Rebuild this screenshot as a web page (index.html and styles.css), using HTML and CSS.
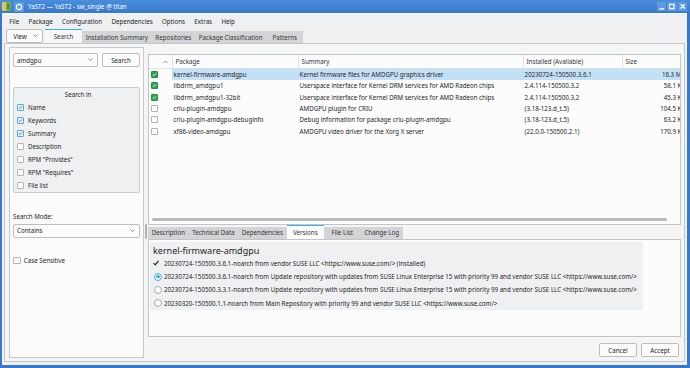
FILE: index.html
```html
<!DOCTYPE html>
<html>
<head>
<meta charset="utf-8">
<title>YaST2</title>
<link rel="stylesheet" href="styles.css">
</head>
<body>
<div class="window">
  <div class="titlebar">
    <svg class="appicon" viewBox="0 0 9 9"><rect x="0" y="0" width="9" height="9" rx="1" fill="#7fb24a"/><rect x="0" y="0" width="4" height="9" rx="1" fill="#e2c45a"/><rect x="5" y="1.5" width="3" height="6" fill="#5c8f33"/></svg>
    <svg class="pinicon" viewBox="0 0 10 10"><rect x="0" y="0" width="10" height="10" rx="1" fill="#5e9de3"/><circle cx="5" cy="5" r="2.6" fill="none" stroke="#fff" stroke-width="1.2"/></svg>
    <span class="title">YaST2 — YaST2 - sw_single @ titan</span>
    <div class="wbtns">
      <span class="wbtn"><svg viewBox="0 0 10 9"><line x1="2.5" y1="7" x2="7.5" y2="7" stroke="#fff" stroke-width="1.4"/></svg></span>
      <span class="wbtn"><svg viewBox="0 0 10 9"><rect x="2.7" y="2.2" width="4.6" height="4.6" fill="none" stroke="#fff" stroke-width="1.2"/></svg></span>
      <span class="wbtn"><svg viewBox="0 0 10 9"><path d="M2.8 2 L7.2 6.6 M7.2 2 L2.8 6.6" stroke="#fff" stroke-width="1.4"/></svg></span>
    </div>
  </div>
  <div class="client">
    <div class="menubar">
      <span class="mi">File</span><span class="mi">Package</span><span class="mi">Configuration</span><span class="mi">Dependencies</span><span class="mi">Options</span><span class="mi">Extras</span><span class="mi">Help</span>
    </div>
    <div class="tabrow">
      <div class="combo view"><span>View</span><svg class="chev" viewBox="0 0 6 4"><polyline points="0.5,0.5 3,3 5.5,0.5" fill="none" stroke="#555" stroke-width="0.8"/></svg></div>
      <div class="tabs">
        <div class="tab active">Search</div>
        <div class="tab">Installation Summary</div>
        <div class="tab">Repositories</div>
        <div class="tab">Package Classification</div>
        <div class="tab">Patterns</div>
      </div>
    </div>
    <div class="page">
      <div class="leftpane">
        <div class="searchrow">
          <div class="combo query"><span>amdgpu</span><svg class="chev" viewBox="0 0 6 4"><polyline points="0.5,0.5 3,3 5.5,0.5" fill="none" stroke="#555" stroke-width="0.8"/></svg></div>
          <button class="btn searchbtn">Search</button>
        </div>
        <div class="group">
          <div class="gtitle">Search in</div>
          <div class="cbrow"><span class="cb on"><svg viewBox="0 0 7 7"><path d="M1.4 3.6 L2.9 5 L5.6 1.9" fill="none" stroke="#1f5f99" stroke-width="1"/></svg></span>Name</div>
          <div class="cbrow"><span class="cb on"><svg viewBox="0 0 7 7"><path d="M1.4 3.6 L2.9 5 L5.6 1.9" fill="none" stroke="#1f5f99" stroke-width="1"/></svg></span>Keywords</div>
          <div class="cbrow"><span class="cb on"><svg viewBox="0 0 7 7"><path d="M1.4 3.6 L2.9 5 L5.6 1.9" fill="none" stroke="#1f5f99" stroke-width="1"/></svg></span>Summary</div>
          <div class="cbrow"><span class="cb"></span>Description</div>
          <div class="cbrow"><span class="cb"></span>RPM "Provides"</div>
          <div class="cbrow"><span class="cb"></span>RPM "Requires"</div>
          <div class="cbrow"><span class="cb"></span>File list</div>
        </div>
        <div class="modelabel">Search Mode:</div>
        <div class="combo mode"><span>Contains</span><svg class="chev" viewBox="0 0 6 4"><polyline points="0.5,0.5 3,3 5.5,0.5" fill="none" stroke="#555" stroke-width="0.8"/></svg></div>
        <div class="caserow"><span class="cb"></span>Case Sensitive</div>
      </div>
      <div class="splitter"></div>
      <div class="rightcol">
        <div class="pkgtable">
          <div class="trow thead">
            <div class="c c0"><svg class="sort" viewBox="0 0 6 4"><polyline points="0.5,3.5 3,1 5.5,3.5" fill="none" stroke="#666" stroke-width="0.8"/></svg></div>
            <div class="c">Package</div>
            <div class="c">Summary</div>
            <div class="c">Installed (Available)</div>
            <div class="c">Size</div>
          </div>
          <div class="trow sel">
            <div class="c c0"><span class="gcb on"><svg viewBox="0 0 7 7"><path d="M1.4 3.6 L2.9 5 L5.6 1.9" fill="none" stroke="#fff" stroke-width="1.1"/></svg></span></div>
            <div class="c">kernel-firmware-amdgpu</div>
            <div class="c">Kernel firmware files for AMDGPU graphics driver</div>
            <div class="c">20230724-150500.3.6.1</div>
            <div class="c size">16.3 MiB</div>
          </div>
          <div class="trow">
            <div class="c c0"><span class="gcb on"><svg viewBox="0 0 7 7"><path d="M1.4 3.6 L2.9 5 L5.6 1.9" fill="none" stroke="#fff" stroke-width="1.1"/></svg></span></div>
            <div class="c">libdrm_amdgpu1</div>
            <div class="c">Userspace interface for Kernel DRM services for AMD Radeon chips</div>
            <div class="c">2.4.114-150500.3.2</div>
            <div class="c size">58.1 KiB</div>
          </div>
          <div class="trow">
            <div class="c c0"><span class="gcb on"><svg viewBox="0 0 7 7"><path d="M1.4 3.6 L2.9 5 L5.6 1.9" fill="none" stroke="#fff" stroke-width="1.1"/></svg></span></div>
            <div class="c">libdrm_amdgpu1-32bit</div>
            <div class="c">Userspace interface for Kernel DRM services for AMD Radeon chips</div>
            <div class="c">2.4.114-150500.3.2</div>
            <div class="c size">45.3 KiB</div>
          </div>
          <div class="trow">
            <div class="c c0"><span class="gcb"></span></div>
            <div class="c">criu-plugin-amdgpu</div>
            <div class="c">AMDGPU plugin for CRIU</div>
            <div class="c">(3.18-123.d_t.5)</div>
            <div class="c size">104.5 KiB</div>
          </div>
          <div class="trow">
            <div class="c c0"><span class="gcb"></span></div>
            <div class="c">criu-plugin-amdgpu-debuginfo</div>
            <div class="c">Debug information for package criu-plugin-amdgpu</div>
            <div class="c">(3.18-123.d_t.5)</div>
            <div class="c size">63.2 KiB</div>
          </div>
          <div class="trow">
            <div class="c c0"><span class="gcb"></span></div>
            <div class="c">xf86-video-amdgpu</div>
            <div class="c">AMDGPU video driver for the Xorg X server</div>
            <div class="c">(22.0.0-150500.2.1)</div>
            <div class="c size">170.9 KiB</div>
          </div>
          <div class="hscroll"></div>
        </div>
        <div class="dtabs">
          <div class="tab">Description</div>
          <div class="tab">Technical Data</div>
          <div class="tab">Dependencies</div>
          <div class="tab active">Versions</div>
          <div class="tab">File List</div>
          <div class="tab">Change Log</div>
        </div>
        <div class="dpane">
          <div class="versions">
            <div class="vhead">kernel-firmware-amdgpu</div>
            <div class="vline"><span class="mark"><svg class="tick" viewBox="0 0 6 6"><path d="M0.6 3.2 L2.2 4.9 L5.5 0.8" fill="none" stroke="#232627" stroke-width="1.2"/></svg></span>20230724-150500.3.6.1-noarch from vendor SUSE LLC &lt;https://www.suse.com/&gt; (installed)</div>
            <div class="vline"><span class="mark"><span class="radio on"></span></span>20230724-150500.3.6.1-noarch from Update repository with updates from SUSE Linux Enterprise 15 with priority 99 and vendor SUSE LLC &lt;https://www.suse.com/&gt;</div>
            <div class="vline"><span class="mark"><span class="radio"></span></span>20230724-150500.3.3.1-noarch from Update repository with updates from SUSE Linux Enterprise 15 with priority 99 and vendor SUSE LLC &lt;https://www.suse.com/&gt;</div>
            <div class="vline"><span class="mark"><span class="radio"></span></span>20230320-150500.1.1-noarch from Main Repository with priority 99 and vendor SUSE LLC &lt;https://www.suse.com/&gt;</div>
          </div>
        </div>
        <div class="buttons">
          <button class="btn">Cancel</button>
          <button class="btn">Accept</button>
        </div>
      </div>
    </div>
  </div>
</div>
</body>
</html>
```

FILE: styles.css
```css
* { box-sizing: border-box; }
html, body { margin: 0; padding: 0; }
body {
  width: 690px;
  height: 368px;
  overflow: hidden;
  font-family: "Noto Sans", "DejaVu Sans", sans-serif;
  font-size: 6.2px;
  color: #232627;
  background: #eff0f1;
}
.window {
  width: 690px;
  height: 368px;
  display: flex;
  flex-direction: column;
  background: #eff0f1;
}

/* title bar */
.titlebar {
  height: 13px;
  flex: none;
  display: flex;
  align-items: center;
  background: linear-gradient(#4a8edc, #3878cc);
  color: #fff;
}
.appicon { width: 9px; height: 9px; margin-left: 2px; flex: none; }
.pinicon { width: 10px; height: 10px; margin-left: 3px; flex: none; }
.title { margin-left: 4px; white-space: nowrap; }
.wbtns { margin-left: auto; margin-right: 3px; display: flex; gap: 1px; }
.wbtn {
  width: 9.5px;
  height: 9px;
  background: #5c9ce3;
  display: flex;
}
.wbtn svg { width: 100%; height: 100%; }

/* client */
.client {
  flex: 1;
  display: flex;
  flex-direction: column;
  border-left: 2px solid #3878cc;
  border-right: 3px solid #3878cc;
  border-bottom: 3px solid #3878cc;
  background: #eff0f1;
}
.menubar {
  height: 15px;
  flex: none;
  display: flex;
  align-items: center;
  padding-left: 2.65px;
  border-top: 1px solid #f7f8f8;
}
.mi { padding: 0 4.65px; white-space: nowrap; }

.tabrow {
  height: 15px;
  flex: none;
  display: flex;
  align-items: flex-end;
}
.combo {
  display: flex;
  align-items: center;
  background: #fcfcfc;
  border: 1px solid #bcbebf;
  border-radius: 2px;
  white-space: nowrap;
}
.chev { width: 5px; height: 3.5px; margin-left: auto; flex: none; }
.view { width: 37px; height: 14px; margin-left: 4px; padding: 0 4px 0 6.3px; }
.tabs { display: flex; align-items: flex-end; margin-left: 2px; }
.tab {
  min-width: 37px;
  padding: 0 3.7px;
  height: 12px;
  display: flex;
  align-items: center;
  justify-content: center;
  white-space: nowrap;
  background: #d3d4d5;
  color: #31363b;
}
.tab.active {
  height: 14px;
  background: #f7f7f7;
  border-top: 1.5px solid #3daee9;
}

/* page */
.page {
  flex: none;
  height: 319px;
  margin: 0 2px;
  border: 1px solid #c5c6c7;
  background: #f4f5f5;
  display: flex;
  padding: 3px 3px 3px 4px;
}
.leftpane {
  width: 135px;
  flex: none;
  border: 1px solid #c8c9ca;
  background: #fbfbfb;
  padding: 5px 3px 0 3px;
  display: flex;
  flex-direction: column;
}
.splitter {
  width: 4px;
  flex: none;
  display: flex;
  justify-content: center;
  padding-top: 177px;
}
.splitter::before {
  content: "";
  width: 1.5px;
  height: 15px;
  background: #b0b1b2;
  border-radius: 1px;
}
.searchrow { display: flex; gap: 4px; height: 14px; }
.query { width: 85px; height: 14px; padding: 0 4px 0 3px; }
.btn {
  font: inherit;
  color: #232627;
  background: #fcfcfc;
  border: 1px solid #bcbebf;
  border-radius: 2px;
  padding: 0;
  height: 14px;
}
.searchbtn { flex: 1; }
.group {
  margin-top: 19.7px;
  border: 1px solid #cdcecf;
  border-radius: 2px;
  background: #eff0f1;
  padding-left: 3.3px;
}
.gtitle { height: 13.1px; display: flex; align-items: center; justify-content: center; }
.cbrow { height: 13.07px; display: flex; align-items: center; gap: 3.7px; white-space: nowrap; }
.cb {
  width: 7px;
  height: 7px;
  flex: none;
  border: 1px solid #b4b5b6;
  border-radius: 1px;
  background: #fcfcfc;
  display: flex;
}
.cb.on { border-color: #5aa7de; background: #e4f2fb; }
.cb svg { width: 100%; height: 100%; }
.modelabel { margin-top: 18.4px; height: 10px; display: flex; align-items: center; }
.mode { margin-top: 2.6px; height: 13.5px; padding: 0 4px 0 3px; }
.caserow { margin-top: 18px; height: 10px; display: flex; align-items: center; gap: 3px; padding-left: 0.3px; }
.caserow .cb { width: 7.5px; height: 7.5px; }

/* right column */
.rightcol {
  flex: 1;
  min-width: 0;
  display: flex;
  flex-direction: column;
  padding-top: 7px;
}
.pkgtable {
  height: 171px;
  flex: none;
  border: 1px solid #c3c4c5;
  background: #fcfcfc;
  display: flex;
  flex-direction: column;
  overflow: hidden;
}
.trow {
  display: grid;
  grid-template-columns: 23px 126px 225px 99px 65px;
  height: 11.3px;
  flex: none;
}
.c {
  display: flex;
  align-items: center;
  padding-left: 1.6px;
  white-space: nowrap;
  overflow: hidden;
}
.c0 { padding-left: 2px; }
.thead {
  height: 14px;
  border-bottom: 1px solid #dfe0e1;
  color: #31363b;
}
.thead .c { padding-left: 2.5px; }
.thead .c + .c { border-left: 1px solid #e0e1e2; }
.thead .c0 { justify-content: flex-end; padding-right: 4px; }
.sort { width: 5px; height: 3.5px; }
.sel .c + .c { background: #c3e1f6; }
.size { justify-content: flex-end; padding-right: 0; }
.gcb {
  width: 7px;
  height: 7px;
  border: 1px solid #b0b1b2;
  background: #fcfcfc;
  border-radius: 1px;
  display: flex;
}
.gcb.on { background: #2aa64c; border-color: #23913f; }
.gcb svg { width: 100%; height: 100%; }
.hscroll {
  margin: auto 13px 3px 3px;
  height: 3.5px;
  background: #b9babb;
  border-radius: 2px;
  flex: none;
}
.dtabs {
  height: 14px;
  flex: none;
  display: flex;
  align-items: flex-end;
}
.dtabs .tab { height: 12.5px; }
.dtabs .tab.active { height: 14px; background: #fcfcfc; }
.dpane {
  height: 98px;
  flex: none;
  border: 1px solid #c3c4c5;
  background: #fcfcfc;
  padding: 2px 0 0 1px;
}
.versions {
  width: max-content;
  background: #eff0f1;
  padding: 4px 5.7px 0 3px;
}
.vhead {
  font-size: 9px;
  height: 10.65px;
  line-height: 10.65px;
  white-space: nowrap;
}
.vline {
  height: 13.3px;
  display: flex;
  align-items: center;
  white-space: nowrap;
}
.mark { width: 11px; flex: none; display: flex; align-items: center; }
.tick { width: 6px; height: 6px; margin-left: 0.3px; }
.radio {
  width: 8px;
  height: 8px;
  margin-left: 1px;
  border-radius: 50%;
  border: 1px solid #a9aaab;
  background: #fcfcfc;
  display: flex;
  align-items: center;
  justify-content: center;
}
.radio.on { border-color: #3daee9; }
.radio.on::after {
  content: "";
  width: 3.6px;
  height: 3.6px;
  border-radius: 50%;
  background: #3daee9;
}
.buttons {
  margin-top: 6px;
  height: 14px;
  flex: none;
  display: flex;
  justify-content: flex-end;
  gap: 4px;
  padding-right: 2px;
}
.buttons .btn { width: 38px; }
```
